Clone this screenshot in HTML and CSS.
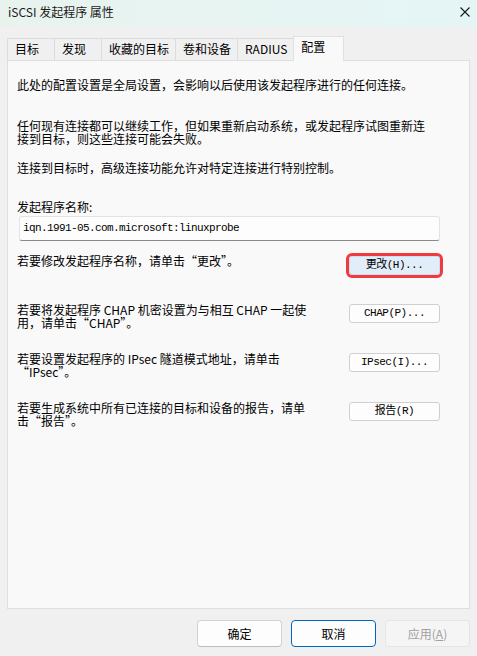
FILE: index.html
```html
<!DOCTYPE html>
<html lang="zh-CN">

<head>
    <meta charset="UTF-8">
    <meta name="viewport" content="width=device-width, initial-scale=1.0">
    <title>iSCSI 发起程序 属性</title>
    <link rel="stylesheet" href="styles.css">
</head>

<body>
    <div class="window">
        <!-- Title bar -->
        <div class="title-bar">
            <span class="title">iSCSI 发起程序 属性</span>
            <svg class="close" width="10" height="10" viewBox="0 0 10 10">
                <path d="M0.5 0.5 L9.5 9.5 M9.5 0.5 L0.5 9.5" stroke="#1a1a1a" stroke-width="1.1" fill="none"/>
            </svg>
        </div>

        <!-- Tabs -->
        <div class="tabs">
            <div class="tab">目标</div>
            <div class="tab">发现</div>
            <div class="tab">收藏的目标</div>
            <div class="tab">卷和设备</div>
            <div class="tab">RADIUS</div>
            <div class="tab active">配置</div>
        </div>

        <!-- Config page -->
        <div class="panel">
            <p class="info first">此处的配置设置是全局设置，会影响以后使用该发起程序进行的任何连接。</p>
            <p class="info second">任何现有连接都可以继续工作，但如果重新启动系统，或发起程序试图重新连<br>接到目标，则这些连接可能会失败。</p>
            <p class="info third">连接到目标时，高级连接功能允许对特定连接进行特别控制。</p>

            <label class="field-label" for="initiatorName">发起程序名称:</label>
            <div class="name-box" id="initiatorName">iqn.1991-05.com.microsoft:linuxprobe</div>

            <div class="rows">
                <div class="row">
                    <span class="row-text">若要修改发起程序名称，请单击“更改”。</span>
                    <button class="btn focused">更改(H)...</button>
                </div>
                <div class="row">
                    <span class="row-text">若要将发起程序 CHAP 机密设置为与相互 CHAP 一起使<br>用，请单击“CHAP”。</span>
                    <button class="btn">CHAP(P)...</button>
                </div>
                <div class="row">
                    <span class="row-text">若要设置发起程序的 IPsec 隧道模式地址，请单击<br>“IPsec”。</span>
                    <button class="btn">IPsec(I)...</button>
                </div>
                <div class="row">
                    <span class="row-text">若要生成系统中所有已连接的目标和设备的报告，请单<br>击“报告”。</span>
                    <button class="btn">报告(R)</button>
                </div>
            </div>
        </div>

        <!-- Dialog buttons -->
        <div class="footer">
            <button class="dlg-btn">确定</button>
            <button class="dlg-btn default">取消</button>
            <button class="dlg-btn" disabled>应用(<u>A</u>)</button>
        </div>
    </div>
</body>

</html>
```

FILE: styles.css
```css
body {
    margin: 0;
    padding: 0;
    background-color: #f0f0f0;
    font-family: "Noto Sans CJK SC", "Noto Sans", sans-serif;
    font-size: 12px;
    color: #000000;
}

.window {
    display: flex;
    flex-direction: column;
    height: 656px;
}

.title-bar {
    display: flex;
    align-items: center;
    justify-content: space-between;
    box-sizing: border-box;
    height: 27px;
    padding: 0 7px 3px 8px;
    background: linear-gradient(to right, #e8f3ee, #e5f5f6);
}

.title {
    line-height: 16px;
    color: #1a1a1a;
}

.close {
    display: block;
}

.tabs {
    display: flex;
    align-items: flex-end;
    margin: 9px 7px 0 7px;
}

.tab {
    box-sizing: border-box;
    height: 22px;
    min-width: 48px;
    padding: 0 6px 0 7px;
    line-height: 20px;
    border: 1px solid #dcdcdc;
    border-bottom: none;
    margin-right: -1px;
    background-color: #f0f0f0;
    white-space: nowrap;
}

.tab.active {
    position: relative;
    z-index: 1;
    height: 25px;
    min-width: 51px;
    padding-bottom: 4px;
    margin-bottom: -1px;
    background-color: #f9f9f9;
    border-color: #e0e0e0;
}

.panel {
    flex: 1;
    margin: 0 7px;
    padding: 17px 29px 0 9px;
    background-color: #f9f9f9;
    border: 1px solid #dfdfdf;
}

.info {
    margin: 0;
    line-height: 13px;
    white-space: nowrap;
}

.info.second {
    margin-top: 28px;
}

.info.third {
    margin-top: 16px;
}

.field-label {
    display: block;
    margin-top: 26px;
    line-height: 13px;
}

.name-box {
    box-sizing: border-box;
    height: 25px;
    margin: 3px 0 0 2px;
    padding: 0 3px;
    line-height: 22px;
    font-family: "Liberation Mono", monospace;
    font-size: 11px;
    letter-spacing: -0.6px;
    background-color: #fdfdfd;
    border: 1px solid #e3e3e3;
    border-bottom: 1px solid #8a8a8a;
    border-radius: 3px;
}

.rows {
    display: flex;
    flex-direction: column;
    gap: 23px;
    margin-top: 13px;
}

.row {
    display: flex;
    justify-content: space-between;
    align-items: flex-start;
    min-height: 26px;
}

.row-text {
    line-height: 13px;
    white-space: nowrap;
}

.btn {
    box-sizing: border-box;
    width: 91px;
    height: 19px;
    margin-top: 1px;
    padding: 0;
    font-family: "Liberation Mono", "Noto Sans CJK SC", monospace;
    font-size: 11px;
    letter-spacing: -0.5px;
    line-height: 17px;
    color: #000000;
    background-color: #fdfdfd;
    border: 1px solid #d0d0d0;
    border-radius: 3px;
}

.btn.focused {
    margin-top: 2px;
    background-color: #e1edf8;
    border-color: #c9def2;
    outline: 3px solid #ef3b3b;
    outline-offset: 0;
}

.footer {
    display: flex;
    justify-content: flex-end;
    gap: 9px;
    padding: 11px 7px 9px 7px;
}

.dlg-btn {
    box-sizing: border-box;
    width: 85px;
    height: 27px;
    padding: 0;
    font-family: "Noto Sans CJK SC", "Noto Sans", sans-serif;
    font-size: 12px;
    color: #000000;
    background-color: #fdfdfd;
    border: 1px solid #d2d2d2;
    border-bottom-color: #bdbdbd;
    border-radius: 4px;
}

.dlg-btn.default {
    border: 1px solid #0067c0;
}

.dlg-btn:disabled {
    color: #a0a0a0;
    background-color: #f5f5f5;
    border-color: #e5e5e5;
}
```
